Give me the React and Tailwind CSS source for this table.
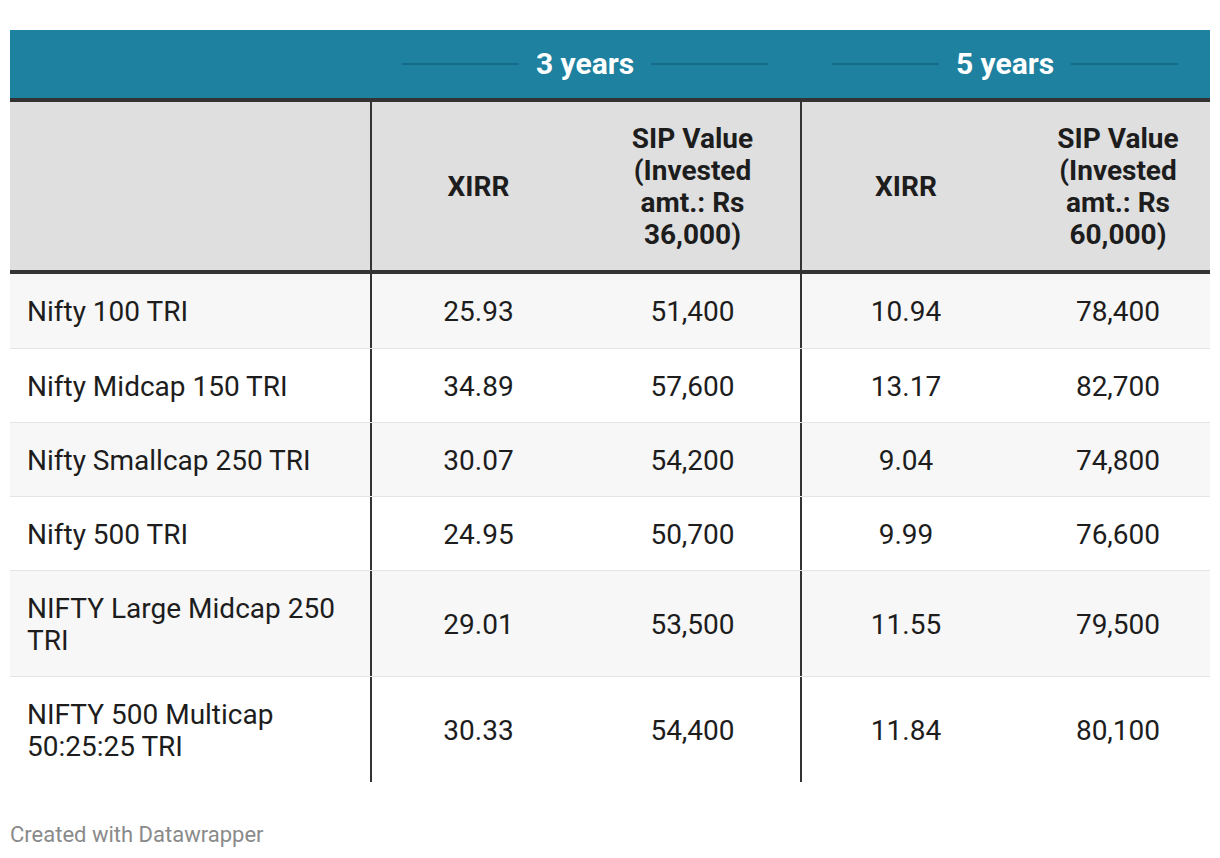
import React from "react";

const rows = [
  { name: "Nifty 100 TRI", a: "25.93", b: "51,400", c: "10.94", d: "78,400", h: "h-[75px]", bg: "bg-[#f7f7f7]" },
  { name: "Nifty Midcap 150 TRI", a: "34.89", b: "57,600", c: "13.17", d: "82,700", h: "h-[74px]", bg: "bg-white" },
  { name: "Nifty Smallcap 250 TRI", a: "30.07", b: "54,200", c: "9.04", d: "74,800", h: "h-[74px]", bg: "bg-[#f7f7f7]" },
  { name: "Nifty 500 TRI", a: "24.95", b: "50,700", c: "9.99", d: "76,600", h: "h-[74px]", bg: "bg-white" },
  { name: "NIFTY Large Midcap 250 TRI", a: "29.01", b: "53,500", c: "11.55", d: "79,500", h: "h-[106px]", bg: "bg-[#f7f7f7]" },
  { name: "NIFTY 500 Multicap 50:25:25 TRI", a: "30.33", b: "54,400", c: "11.84", d: "80,100", h: "h-[105px]", bg: "bg-white", last: true },
];

function GroupHead({ label, w }) {
  return (
    <div className={`${w} flex items-center gap-[17px] px-[32px]`}>
      <div className="flex-1 h-[2px] bg-[#176b88]" />
      <span className="text-[30px] font-bold text-white leading-none">{label}</span>
      <div className="flex-1 h-[2px] bg-[#176b88]" />
    </div>
  );
}

export default function App() {
  return (
    <div className="w-[1220px] h-[858px] bg-white pt-[30px] px-[10px] text-[#1d1d1d]" style={{ fontFamily: "Roboto, 'Liberation Sans', sans-serif" }}>
      <div className="w-[1200px]">
        <div className="flex h-[68px] bg-[#1e81a0]">
          <div className="w-[360px]" />
          <GroupHead label="3 years" w="w-[430px]" />
          <GroupHead label="5 years" w="w-[410px]" />
        </div>
        <div className="h-[4px] bg-[#333333]" />
        <div className="flex h-[168px] bg-[#dfdfdf] text-[28px] font-bold leading-[32px] text-center">
          <div className="w-[360px]" />
          <div className="w-[215px] border-l-2 border-[#333333] flex items-center justify-center pt-[2px]">XIRR</div>
          <div className="w-[215px] flex items-center justify-center pt-[2px]">
            <div>SIP Value<br />(Invested<br />amt.: Rs<br />36,000)</div>
          </div>
          <div className="w-[210px] border-l-2 border-[#333333] flex items-center justify-center pt-[2px]">XIRR</div>
          <div className="w-[200px] flex items-center justify-center pl-[16px] pt-[2px]">
            <div>SIP Value<br />(Invested<br />amt.: Rs<br />60,000)</div>
          </div>
        </div>
        <div className="h-[4px] bg-[#333333]" />
        {rows.map((r) => (
          <div key={r.name} className={`flex ${r.h} ${r.bg} ${r.last ? "" : "border-b border-[#e4e4e4]"} text-[28px] leading-[32px]`}>
            <div className="w-[360px] flex items-center pl-[17px] pr-[20px] pt-[2px]">{r.name}</div>
            <div className="w-[215px] border-l-2 border-[#333333] flex items-center justify-center pt-[2px]">{r.a}</div>
            <div className="w-[215px] flex items-center justify-center pt-[2px]">{r.b}</div>
            <div className="w-[210px] border-l-2 border-[#333333] flex items-center justify-center pt-[2px]">{r.c}</div>
            <div className="w-[200px] flex items-center justify-center pl-[16px] pt-[2px]">{r.d}</div>
          </div>
        ))}
        <div className="mt-[40px] text-[22px] text-[#8a8a8a] leading-[26px]">Created with Datawrapper</div>
      </div>
    </div>
  );
}
